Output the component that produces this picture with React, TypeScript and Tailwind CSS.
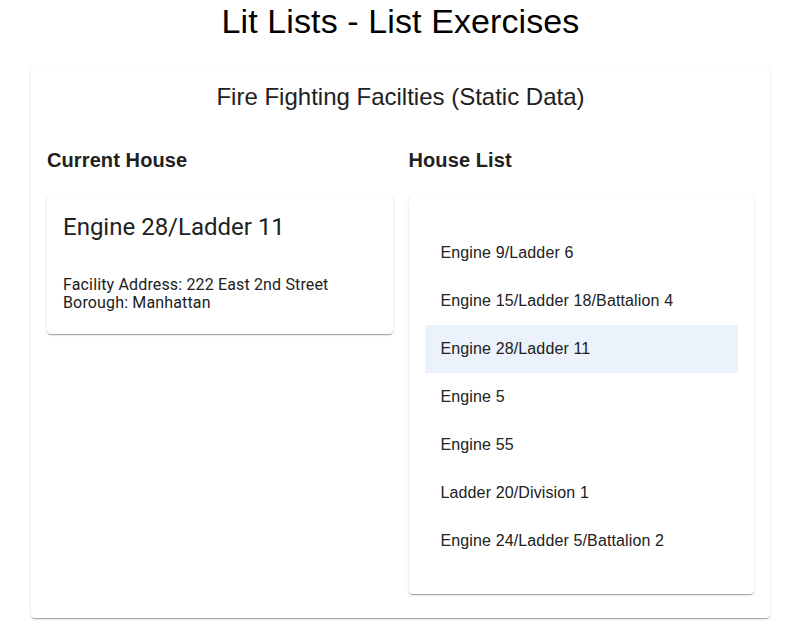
const houses = [
  "Engine 9/Ladder 6",
  "Engine 15/Ladder 18/Battalion 4",
  "Engine 28/Ladder 11",
  "Engine 5",
  "Engine 55",
  "Ladder 20/Division 1",
  "Engine 24/Ladder 5/Battalion 2",
];

const selected = "Engine 28/Ladder 11";

const cardShadow =
  "shadow-[0_2px_1px_-1px_rgba(0,0,0,0.2),0_1px_1px_0_rgba(0,0,0,0.14),0_1px_3px_0_rgba(0,0,0,0.12)]";

export default function App() {
  return (
    <div className="min-h-[643px] bg-white text-[#212121] font-['Liberation_Sans',Arial,sans-serif]">
      <div className="ml-[31px] w-[739px]">
        <h1 className="pt-[1px] text-center text-[34px] leading-[40px] tracking-[0.1px] text-black">
          Lit Lists - List Exercises
        </h1>
        <div className={`mt-[25px] rounded bg-white px-4 pb-6 ${cardShadow}`}>
          <h2 className="pt-[17px] text-center text-[24px] leading-[28px] text-[#212121]">
            Fire Fighting Facilties (Static Data)
          </h2>
          <div className="mt-[37px] grid grid-cols-2 gap-4">
            <div>
              <h3 className="text-[20px] leading-[24px] font-bold tracking-[0.1px]">
                Current House
              </h3>
              <div className={`mt-[23px] rounded bg-white px-4 pt-4 pb-[22px] font-['Roboto',sans-serif] ${cardShadow}`}>
                <div className="text-[24px] leading-[32px]">{selected}</div>
                <div className="mt-[33px] text-[16px] leading-[18px] tracking-[0.15px]">
                  <div>Facility Address: 222 East 2nd Street</div>
                  <div>Borough: Manhattan</div>
                </div>
              </div>
            </div>
            <div>
              <h3 className="text-[20px] leading-[24px] font-bold tracking-[0.1px]">
                House List
              </h3>
              <div className={`mt-[23px] rounded bg-white p-4 ${cardShadow}`}>
                <ul className="pt-[18px] pb-[13px]">
                  {houses.map((h) => (
                    <li
                      key={h}
                      className={`flex h-12 items-center px-4 text-[16px] tracking-[0.13px] ${
                        h === selected ? "bg-[#ebf2fb]" : ""
                      }`}
                    >
                      {h}
                    </li>
                  ))}
                </ul>
              </div>
            </div>
          </div>
        </div>
      </div>
    </div>
  );
}
